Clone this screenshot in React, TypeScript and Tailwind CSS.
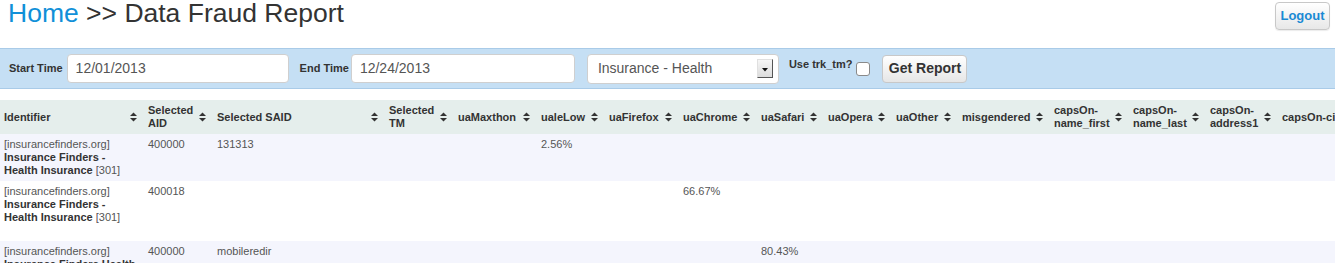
import React from "react";

const SortIcon = () => (
  <svg width="7" height="10" viewBox="0 0 7 10" className="shrink-0">
    <polygon points="0,4 3.5,0.5 7,4" fill="#333" />
    <polygon points="0,6 3.5,9.5 7,6" fill="#333" />
  </svg>
);

type Col = { w: number; lines: string[] };

const cols: Col[] = [
  { w: 144, lines: ["Identifier"] },
  { w: 69, lines: ["Selected", "AID"] },
  { w: 172, lines: ["Selected SAID"] },
  { w: 69, lines: ["Selected", "TM"] },
  { w: 83, lines: ["uaMaxthon"] },
  { w: 68, lines: ["ualeLow"] },
  { w: 74, lines: ["uaFirefox"] },
  { w: 78, lines: ["uaChrome"] },
  { w: 67, lines: ["uaSafari"] },
  { w: 68, lines: ["uaOpera"] },
  { w: 66, lines: ["uaOther"] },
  { w: 92, lines: ["misgendered"] },
  { w: 79, lines: ["capsOn-", "name_first"] },
  { w: 77, lines: ["capsOn-", "name_last"] },
  { w: 72, lines: ["capsOn-", "address1"] },
  { w: 100, lines: ["capsOn-city"] },
  { w: 100, lines: ["capsOn-state"] },
];

type Row = { id: React.ReactNode; cells: Record<number, string>; h: string; bg: string };

const Ident = ({ name }: { name: string }) => (
  <>
    <span>[insurancefinders.org]</span>
    <br />
    <b className="text-[#333]">{name}</b> <span>[301]</span>
  </>
);

const rows: Row[] = [
  {
    id: <Ident name={"Insurance Finders - Health Insurance"} />,
    cells: { 1: "400000", 2: "131313", 5: "2.56%" },
    h: "h-[47px]",
    bg: "bg-[#f4f5fd]",
  },
  {
    id: <Ident name={"Insurance Finders - Health Insurance"} />,
    cells: { 1: "400018", 7: "66.67%" },
    h: "h-[60px]",
    bg: "bg-white",
  },
  {
    id: <Ident name={"Insurance Finders Health Insurance"} />,
    cells: { 1: "400000", 2: "mobileredir", 8: "80.43%" },
    h: "h-[60px]",
    bg: "bg-[#f4f5fd]",
  },
];

export default function App() {
  const totalW = cols.reduce((a, c) => a + c.w, 0);
  return (
    <div
      className="h-[263px] w-[1335px] overflow-hidden bg-white text-[#333]"
      style={{ fontFamily: '"Liberation Sans", Arial, sans-serif' }}
    >
      {/* Title row */}
      <div className="flex items-start justify-between pl-[8px] pr-[5px]">
        <h1 className="m-0 text-[26.5px] font-normal leading-[26px] text-[#333]">
          <span className="text-[#1190d8]">Home</span> &gt;&gt; Data Fraud Report
        </h1>
        <button className="mt-[2px] h-[28px] w-[55px] rounded-[4px] border border-[#c8c8c8] bg-gradient-to-b from-white to-[#e8e8e8] text-[13px] font-bold text-[#1a8ad4] shadow-[0_1px_1px_rgba(0,0,0,0.08)]">
          Logout
        </button>
      </div>

      {/* Filter bar */}
      <div className="mt-[18px] flex h-[41px] items-center border-y border-[#a9cbe8] bg-[#c5dff4] pl-[9px]">
        <span className="text-[11px] font-bold">Start Time</span>
        <div className="ml-[4px] flex h-[29px] w-[222px] items-center rounded-[4px] border border-[#cfcfcf] bg-white pl-[8px] text-[14px] text-[#555]">
          12/01/2013
        </div>
        <span className="ml-[11px] text-[11px] font-bold">End Time</span>
        <div className="ml-[2px] flex h-[29px] w-[224px] items-center rounded-[4px] border border-[#cfcfcf] bg-white pl-[8px] text-[14px] text-[#555]">
          12/24/2013
        </div>
        <div className="ml-[12px] flex h-[30px] w-[192px] items-center justify-between rounded-[4px] border border-[#cfcfcf] bg-white pl-[10px] pr-[5px] text-[14px] text-[#555]">
          <span>Insurance - Health</span>
          <div className="flex h-[19px] w-[16px] items-center justify-center border border-[#e0e0e0] border-b-[#555] border-r-[#555] bg-gradient-to-b from-[#f6f6f6] to-[#dcdcdc]">
            <svg width="6" height="4" viewBox="0 0 6 4" className="mt-[2px]">
              <polygon points="0,0 6,0 3,3.5" fill="#111" />
            </svg>
          </div>
        </div>
        <span className="ml-[10px] -mt-[9px] text-[11px] font-bold">Use trk_tm?</span>
        <div className="ml-[4px] mt-[1px] h-[14px] w-[14px] rounded-[3px] border border-[#8a8a8a] bg-white" />
        <button className="ml-[12px] h-[28px] w-[85px] rounded-[4px] border border-[#c8c8c8] bg-gradient-to-b from-white to-[#e6e6e6] text-[14px] font-bold text-[#333]">
          Get Report
        </button>
      </div>

      {/* Table */}
      <table
        className="mt-[11px] table-fixed border-collapse"
        style={{ width: totalW }}
      >
        <colgroup>
          {cols.map((c, i) => (
            <col key={i} style={{ width: c.w }} />
          ))}
        </colgroup>
        <thead>
          <tr className="h-[34px] bg-[#e5eeec]">
            {cols.map((c, i) => (
              <th key={i} className="p-0 text-left align-middle">
                <div className="flex items-center justify-between pl-[4px] pr-[7px] text-[11px] font-bold leading-[13px] text-[#333]">
                  <span className="whitespace-nowrap">
                    {c.lines.map((l, j) => (
                      <React.Fragment key={j}>
                        {j > 0 && <br />}
                        {l}
                      </React.Fragment>
                    ))}
                  </span>
                  <SortIcon />
                </div>
              </th>
            ))}
          </tr>
        </thead>
        <tbody>
          {rows.map((r, ri) => (
            <tr key={ri} className={`${r.h} ${r.bg}`}>
              {cols.map((_, ci) => (
                <td
                  key={ci}
                  className="p-0 pl-[4px] pr-[4px] pt-[4px] align-top text-[11px] leading-[13px] text-[#555]"
                >
                  {ci === 0 ? r.id : r.cells[ci] ?? ""}
                </td>
              ))}
            </tr>
          ))}
        </tbody>
      </table>
    </div>
  );
}
